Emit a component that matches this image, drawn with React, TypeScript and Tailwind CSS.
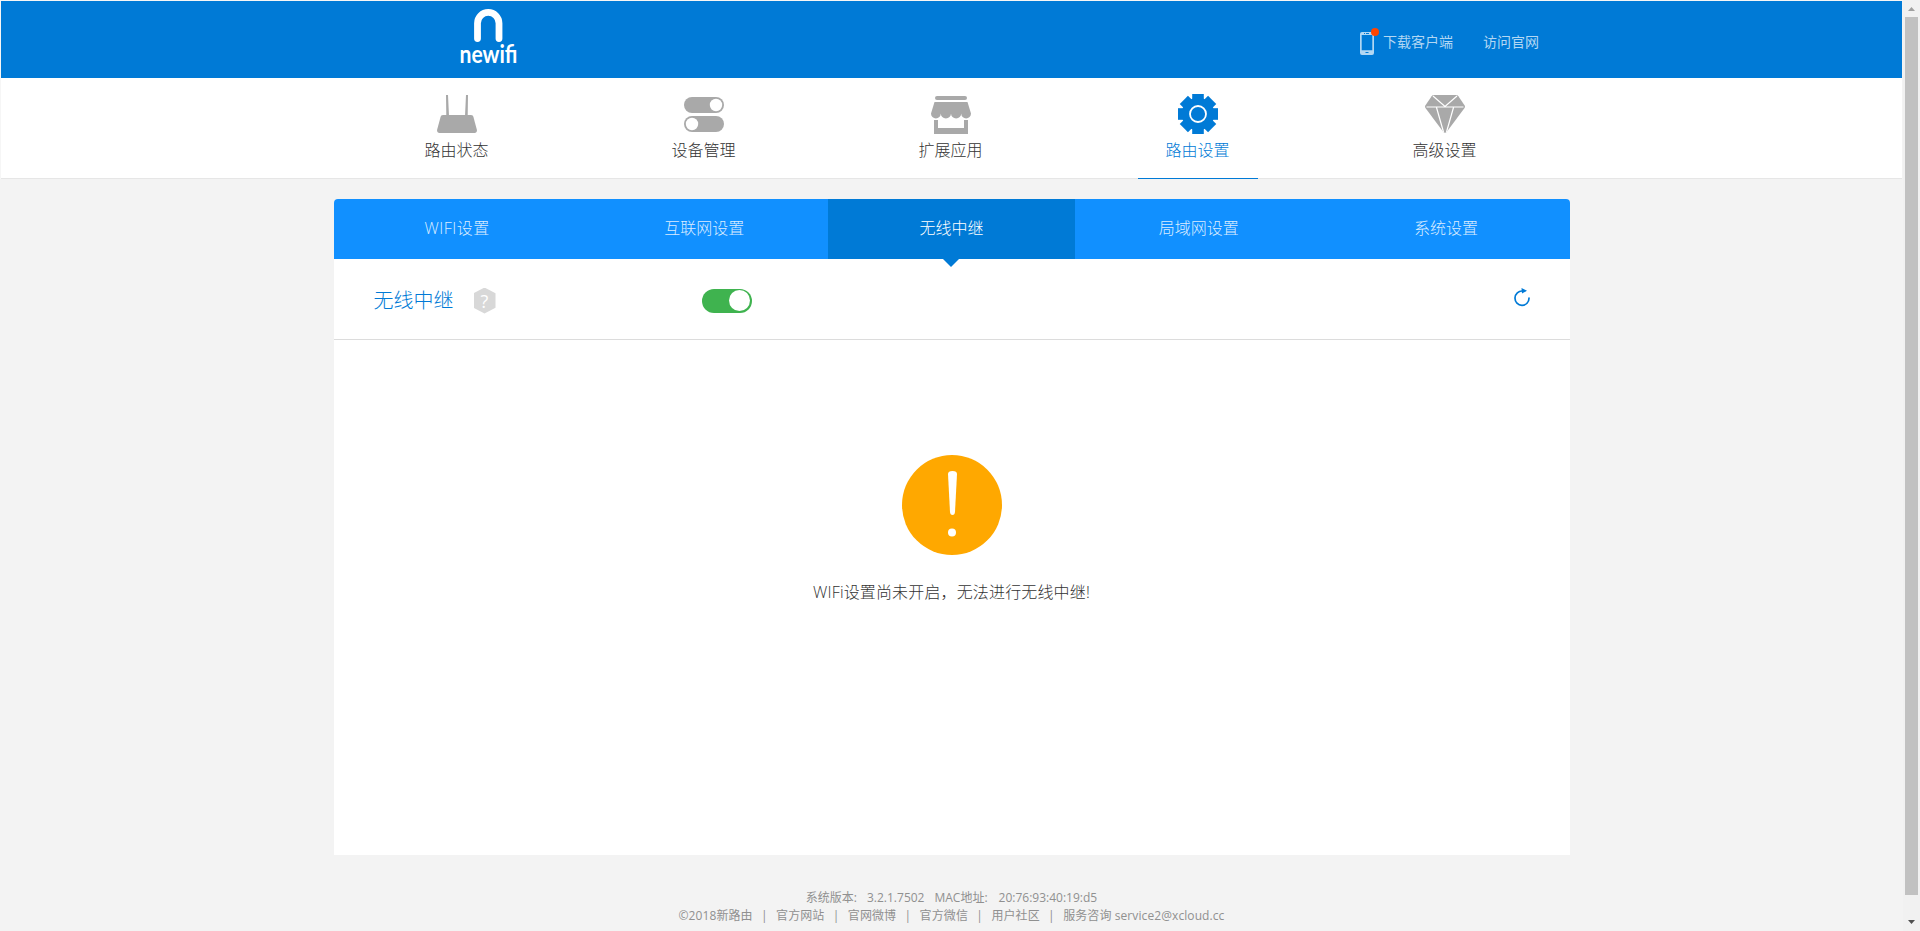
import React from "react";

type IconProps = { children: React.ReactNode };

function NavIcon({ children }: IconProps) {
  return (
    <svg className="block h-10 w-10" viewBox="0 0 40 40" fill="currentColor">
      {children}
    </svg>
  );
}

const NAV = [
  {
    label: "路由状态",
    icon: (
      <NavIcon>
        <path d="M9 1h2l1 21H9.300zM29 1h2l-.3 21H28z" />
        <path d="M6 21h28c1.500 0 2.100.8 2.500 2.200l3.300 12.300c.5 2-.4 3.500-2.300 3.500h-35C.6 39-.3 37.500.2 35.500l3.300-12.300C3.900 21.800 4.500 21 6 21z" />
      </NavIcon>
    ),
  },
  {
    label: "设备管理",
    icon: (
      <NavIcon>
        <rect x="0" y="3" width="40" height="16" rx="8" />
        <rect x="0" y="22" width="40" height="16" rx="8" />
        <circle cx="32" cy="11" r="6.200" fill="#fff" />
        <circle cx="8" cy="30" r="6.200" fill="#fff" />
      </NavIcon>
    ),
  },
  {
    label: "扩展应用",
    icon: (
      <NavIcon>
        <rect x="4" y="2" width="32" height="4" rx="2" />
        <path d="M3.500 8h33L40 19.500a4.900 4.900 0 0 1-9.800 0 5.100 5.100 0 0 1-10.200 0 5.100 5.100 0 0 1-10.200 0A4.900 4.900 0 0 1 0 19.500z" />
        <path d="M3 26h4v8h26v-8h4v14H3z" />
      </NavIcon>
    ),
  },
  {
    label: "路由设置",
    active: true,
    icon: (
      <NavIcon>
        <circle cx="20" cy="20" r="16.300" />
        <rect x="14.200" y="0" width="11.600" height="40" />
        <rect x="0" y="14.200" width="40" height="11.600" />
        <rect x="14.200" y="0" width="11.600" height="40" transform="rotate(45 20 20)" />
        <rect x="14.200" y="0" width="11.600" height="40" transform="rotate(-45 20 20)" />
        <circle cx="20" cy="20" r="8" fill="none" stroke="#fff" strokeWidth="1.800" />
      </NavIcon>
    ),
  },
  {
    label: "高级设置",
    icon: (
      <NavIcon>
        <path d="M9 1h22q1.500 0 2.400 1.300L40 12q0 1.500-.8 2.600L22 37.500q-2 2.600-4 0L.8 14.600Q0 13.500 0 12L6.600 2.300Q7.500 1 9 1z" />
        <path d="M1.500 13h37M8 2l12 10.500L32 2M11.500 13.500l7 24.500M28.500 13.500l-7 24.500" fill="none" stroke="#fff" strokeWidth="1.200" />
      </NavIcon>
    ),
  },
];

const TABS = ["WIFI设置", "互联网设置", "无线中继", "局域网设置", "系统设置"];
const LINKS = ["©2018新路由", "官方网站", "官网微博", "官方微信", "用户社区", "服务咨询 service2@xcloud.cc"];

function Logo() {
  return (
    <svg className="block h-[76px] w-[60px] overflow-visible" viewBox="0 0 60 76">
      <path d="M18.500 37.500V22.200a10.750 10.750 0 0 1 21.500 0V37.500" fill="none" stroke="#fff" strokeWidth="6.800" strokeLinecap="round" />
      <text x="0.500" y="61.800" textLength="58" lengthAdjust="spacingAndGlyphs" fill="#fff" fontFamily="Lato, sans-serif" fontWeight="700" fontSize="25">
        newifi
      </text>
    </svg>
  );
}

function Header() {
  return (
    <header className="flex h-[77px] bg-[#007ad6] pl-[458px] text-sm leading-none text-[#b2d7f3]">
      <div className="w-[901px]">
        <Logo />
      </div>
      <div className="flex w-[123px] pt-[26px]">
        <svg className="block h-[30px] w-[20px]" viewBox="0 0 20 30">
          <path fillRule="evenodd" fill="#b2d7f3" d="M2 5h10a2 2 0 0 1 2 2v19a2 2 0 0 1-2 2H2a2 2 0 0 1-2-2V7a2 2 0 0 1 2-2zM1.700 8v15.200h10.600V8z" />
          <path stroke="#007ad6" d="M4 6.500h1M6 6.500h3M5.500 25.500h3" />
          <circle cx="15" cy="5" r="4" fill="#ff4500" />
        </svg>
        <a className="ml-[3px] pt-2">下载客户端</a>
      </div>
      <a className="pt-[34px]">访问官网</a>
    </header>
  );
}

function MainNav() {
  return (
    <nav className="flex h-[101px] border-b border-[#e6e6e6] bg-white pl-[332px]">
      <div className="flex w-[1235px]">
        {NAV.map((n) => (
          <div key={n.label} className="flex flex-1 justify-center">
            <div
              className={
                n.active
                  ? "flex h-[101px] w-[120px] flex-col items-center border-b border-[#007ad6] pt-4 text-[#007ad6]"
                  : "flex h-[101px] w-[120px] flex-col items-center pt-4 text-[#a9a9a9]"
              }
            >
              {n.icon}
              <span className={n.active ? "mt-1 text-base leading-6 font-light" : "mt-1 text-base leading-6 font-light text-[#333]"}>
                {n.label}
              </span>
            </div>
          </div>
        ))}
      </div>
    </nav>
  );
}

function Tabs() {
  return (
    <div className="flex h-[60px] rounded-t bg-[#1190ff] text-base font-light">
      {TABS.map((t, i) => (
        <div
          key={t}
          className={
            i === 2
              ? "relative flex flex-1 items-center justify-center bg-[#007ad6] text-white"
              : "flex flex-1 items-center justify-center text-[#dbecff]"
          }
        >
          <span className={i === 0 ? "-mt-0.5 tracking-[0.5px]" : "-mt-0.5"}>{t}</span>
          {i === 2 && (
            <svg className="absolute top-full left-1/2 -ml-px h-2 w-4 -translate-x-1/2" viewBox="0 0 16 8">
              <path d="M0 0h16L8 8z" fill="#007ad6" />
            </svg>
          )}
        </div>
      ))}
    </div>
  );
}

function RepeaterRow() {
  return (
    <div className="flex h-[81px] items-center border-b border-[#dcdcdc] pt-[3px] pr-10 pl-10">
      <h1 className="w-[100px] text-xl font-light text-[#007ad6]">无线中继</h1>
      <span className="flex h-[26px] w-[22px] items-center justify-center bg-[#d8d8d8] text-lg leading-none text-white [clip-path:polygon(50%_0,100%_22%,100%_78%,50%_100%,0_78%,0_22%)]">
        ?
      </span>
      <div className="ml-[206px] flex h-6 w-[50px] items-center justify-end rounded-full bg-[#3fb34f] pt-px pr-[2px] pb-[2px]">
        <span className="size-[21px] rounded-full bg-white" />
      </div>
      <svg className="-mt-[7px] ml-auto block h-5 w-4" viewBox="0 0 16 20">
        <path d="M8.500 4A7 7.200 0 1 0 15 11" fill="none" stroke="#007ad6" strokeWidth="1.700" strokeLinecap="round" />
        <path d="M7.500 1l5.500 2.800-5 2.700z" fill="#007ad6" />
      </svg>
    </div>
  );
}

function Scrollbar() {
  return (
    <aside className="flex w-[17px] flex-col items-center bg-[#f1f1f1]">
      <svg className="block h-[17px] w-[17px]" viewBox="0 0 17 17">
        <path d="M5 11h7L8.500 7z" fill="#a0a0a0" />
      </svg>
      <div className="h-[878px] w-[13px] bg-[#c1c1c1]" />
      <svg className="mt-auto block h-[17px] w-[17px]" viewBox="0 0 17 17">
        <path d="M5 6h7L8.500 10z" fill="#505050" />
      </svg>
    </aside>
  );
}

export default function App() {
  return (
    <div className="flex h-[931px] w-[1920px] overflow-hidden bg-[#f3f3f3] font-['Open_Sans','Noto_Sans_CJK_SC',sans-serif]">
      <div className="flex w-[1903px] flex-col">
        <div className="border-t border-l border-[#f6f6f6] pr-px">
          <Header />
          <MainNav />
        </div>
        <main className="mx-auto mt-5 h-[656px] w-[1236px] rounded-t bg-white">
          <Tabs />
          <RepeaterRow />
          <div className="flex flex-col items-center pt-[115px]">
            <svg className="block size-[100px]" viewBox="0 0 100 100">
              <circle cx="50" cy="50" r="50" fill="#ffa800" />
              <path d="M46 19q0-3 4.500-3t4.500 3l-2 38q-.3 3-2.500 3T48 57z" fill="#fff" />
              <circle cx="50" cy="77.500" r="4" fill="#fff" />
            </svg>
            <p className="mt-[25px] text-base leading-6 font-light tracking-[0.15px] text-[#333]">WIFi设置尚未开启，无法进行无线中继!</p>
          </div>
        </main>
        <footer className="mt-[34px] flex flex-col items-center text-xs leading-[18px] text-[#909090]">
          <div className="flex gap-[11px]">
            <span>系统版本:</span>
            <span className="-ml-px">3.2.1.7502</span>
            <span className="-ml-px">MAC地址:</span>
            <span>20:76:93:40:19:d5</span>
          </div>
          <div className="flex tracking-[0.09px]">
            {LINKS.map((l, i) => (
              <React.Fragment key={l}>
                {i > 0 && <span className="w-[23.4px] text-center">|</span>}
                <span className="whitespace-nowrap">{l}</span>
              </React.Fragment>
            ))}
          </div>
        </footer>
      </div>
      <Scrollbar />
    </div>
  );
}
